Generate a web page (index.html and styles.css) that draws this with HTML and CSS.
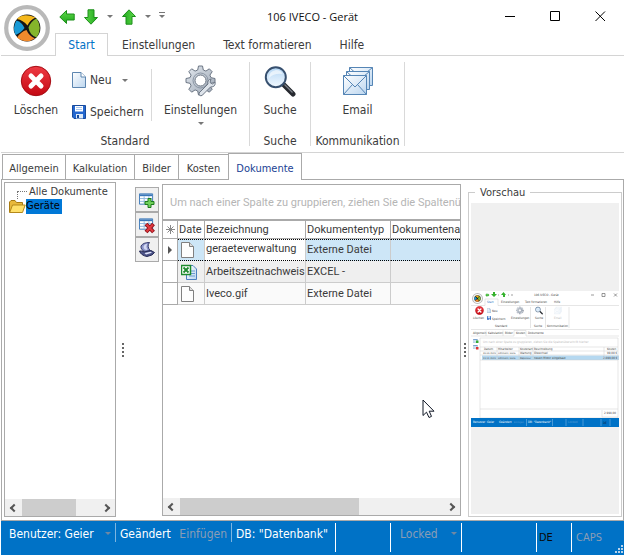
FILE: index.html
```html
<!DOCTYPE html>
<html lang="de">
<head>
<meta charset="utf-8">
<title>106 IVECO - Gerät</title>
<link rel="stylesheet" href="styles.css">
</head>
<body>
<svg width="0" height="0" class="defs" aria-hidden="true">
  <defs>
    <linearGradient id="red" x1="0" y1="0" x2="0" y2="1"><stop offset="0" stop-color="#ee3b44"/><stop offset="1" stop-color="#c40812"/></linearGradient>
    <linearGradient id="steel" x1="0" y1="0" x2="1" y2="1"><stop offset="0" stop-color="#e3e8ee"/><stop offset="1" stop-color="#9aa5b3"/></linearGradient>
    <linearGradient id="paper" x1="0" y1="0" x2="1" y2="1"><stop offset="0" stop-color="#ffffff"/><stop offset="1" stop-color="#bcd6ef"/></linearGradient>
    <linearGradient id="glass" x1="0" y1="0" x2="0" y2="1"><stop offset="0" stop-color="#b4d6f4"/><stop offset="1" stop-color="#f2f9ff"/></linearGradient>
    <linearGradient id="green" x1="0" y1="0" x2="0" y2="1"><stop offset="0" stop-color="#5fd84a"/><stop offset="1" stop-color="#1fa81c"/></linearGradient>
    <symbol id="logo" viewBox="0 0 46 46">
      <circle cx="23" cy="23" r="20.8" fill="#fff" stroke="#b9b9b9" stroke-width="4.2"/>
      <circle cx="23" cy="23" r="13.400" fill="#151515"/>
      <path d="M13 14Q19 7.500 31.500 12.500Q26 15 23.500 20.500Q19 15 13 14Z" fill="#f5b81c"/>
      <path d="M32.500 13.500Q39 23 32.500 32.500Q25.500 30 24.500 22.500Q27 16 32.500 13.500Z" fill="#85b52b"/>
      <path d="M12.500 15.500Q8 23 11.500 30Q17 28 20.500 23Q18 17 12.500 15.500Z" fill="#1a9ad6"/>
      <path d="M13 32.500Q17 26.500 22.500 25Q25 31 31 33.500Q22 39.500 13 32.500Z" fill="#f08a2c"/>
    </symbol>
    <symbol id="arrow" viewBox="0 0 16 16"><path d="M.8 8L7.500 1.500V5H15.200V11H7.500V14.500Z" fill="url(#green)" stroke="#1c8f1a"/></symbol>
    <symbol id="gear" viewBox="0 0 32 32">
      <path d="M13.500 1h4l.8 4 2.600 1.100 3.400-2.300 2.900 2.900-2.300 3.400 1.100 2.600 4 .8v4l-4 .8-1.100 2.600 2.300 3.400-2.900 2.900-3.400-2.300-2.600 1.100-.8 4h-4l-.8-4-2.600-1.100-3.400 2.300-2.900-2.900 2.300-3.400L5 18.300l-4-.8v-4l4-.8 1.100-2.600-2.300-3.400 2.900-2.900 3.400 2.300L12.700 5Z" fill="url(#steel)" stroke="#6d7785"/>
      <circle cx="15.500" cy="15.500" r="5.500" fill="#fff" stroke="#6d7785"/>
      <circle cx="15.500" cy="15.500" r="7.500" fill="none" stroke="#8b96a4"/>
      <path d="M14 28L23 19Q22 15 26 14L25 17.500L27.500 19L30 17Q31 22 25.500 22L17 30.500Q14 31.500 14 28Z" fill="#dde3ea" stroke="#6d7785"/>
    </symbol>
    <symbol id="lens" viewBox="0 0 32 32">
      <path d="M20 20L29 29" stroke="#26292f" stroke-width="5" stroke-linecap="round"/>
      <path d="M20.500 19.500L28.500 27.500" stroke="#7c8189" stroke-width="1.200"/>
      <circle cx="11.800" cy="12.200" r="10" fill="url(#glass)" stroke="#37506f" stroke-width="2"/>
      <path d="M5 13Q5 6 12 5Q17 5 18.500 9Q10 8 5 13Z" fill="#fff" opacity=".6"/>
    </symbol>
    <symbol id="mail" viewBox="0 0 32 30">
      <g fill="url(#paper)" stroke="#5585b5">
        <path d="M7.500 1.500h23v18h-23z"/><path d="M7.500 1.500l11 10 12-10" fill="none"/>
        <path d="M4.500 5.500h23v18h-23z"/><path d="M4.500 5.500l11 10 12-10" fill="none"/>
        <path d="M1.500 9.500h23v19h-23z"/><path d="M1.500 28.500l9-10M24.500 28.500l-9-10M1.500 9.500L13 21L24.500 9.500" fill="none"/>
      </g>
    </symbol>
    <symbol id="delete" viewBox="0 0 32 32"><circle cx="16" cy="16" r="14.700" fill="url(#red)" stroke="#a50c14"/><path d="M11 11L21 21M21 11L11 21" stroke="#fff" stroke-width="5" stroke-linecap="round"/></symbol>
    <symbol id="new" viewBox="0 0 14 16"><path d="M.5.500H9L13.500 5V15.500H.5Z" fill="url(#paper)" stroke="#5d86b0"/><path d="M9 .5V5H13.500" fill="#fff" stroke="#5d86b0"/></symbol>
    <symbol id="save" viewBox="0 0 14 14"><path d="M.5.500H13.500V13.500H2L.5 12Z" fill="#2467cf" stroke="#174a9c"/><path d="M3 1h8v5.500H3z" fill="#fff"/><path d="M4 2.500h6M4 4.500h6" stroke="#a8c6ec"/><path d="M4 9h7v4.500H4z" fill="#dce9f8"/><path d="M5 10h2v3H5z" fill="#174a9c"/></symbol>
    <symbol id="sheet" viewBox="0 0 16 12"><path d="M.5.500h14v11H.5z" fill="#fff" stroke="#3976b8"/><path d="M1 1h13v2H1z" fill="#3976b8"/><path d="M1 5.500h13M1 8.500h13M5.500 3v8M10.500 3v8" stroke="#8eb7df"/></symbol>
    <symbol id="page" viewBox="0 0 13 16"><path d="M.5.500H8.500L12.500 4.500V15.500H.5Z" fill="#fdfdfd" stroke="#808080"/><path d="M8.500.5V4.500H12.500" fill="#ddd" stroke="#808080"/></symbol>
  </defs>
</svg>

<header class="top">
  <svg class="logo" role="img" aria-label="Programm"><use href="#logo"/></svg>
  <div class="titlebar">
    <nav class="quick" aria-label="Schnellzugriff">
      <button class="plain" aria-label="Zurück"><svg class="arr"><use href="#arrow"/></svg></button>
      <button class="plain" aria-label="Nächster"><svg class="arr down"><use href="#arrow"/></svg></button>
      <i class="caret"></i>
      <button class="plain" aria-label="Vorheriger"><svg class="arr up"><use href="#arrow"/></svg></button>
      <i class="caret"></i><i class="caret more"></i>
    </nav>
    <h1>106 IVECO - Gerät</h1>
    <div class="window">
      <button class="plain" aria-label="Minimieren"><svg width="11" height="11"><path d="M0 5.500H10" stroke="#000"/></svg></button>
      <button class="plain" aria-label="Maximieren"><svg width="11" height="11"><path d="M.5.500H9.500V9.500H.5Z" fill="none" stroke="#000"/></svg></button>
      <button class="plain" aria-label="Schließen"><svg width="11" height="11"><path d="M.5.500L10 10M10 .5L.5 10" stroke="#000"/></svg></button>
    </div>
  </div>
  <nav class="menu">
    <button class="plain on">Start</button><button class="plain">Einstellungen</button><button class="plain">Text formatieren</button><button class="plain">Hilfe</button>
  </nav>
</header>

<section class="ribbon">
  <div class="group standard">
    <div class="tools">
      <button class="plain big"><svg width="32" height="32"><use href="#delete"/></svg>Löschen</button>
      <div class="stack">
        <button class="plain small"><svg width="14" height="16"><use href="#new"/></svg>Neu<i class="caret"></i></button>
        <button class="plain small"><svg width="14" height="14"><use href="#save"/></svg>Speichern</button>
      </div>
      <button class="plain big config"><svg width="32" height="32"><use href="#gear"/></svg>Einstellungen<i class="caret"></i></button>
    </div>
    <div class="name">Standard</div>
  </div>
  <div class="group find">
    <div class="tools"><button class="plain big"><svg width="32" height="32"><use href="#lens"/></svg>Suche</button></div>
    <div class="name">Suche</div>
  </div>
  <div class="group comm">
    <div class="tools"><button class="plain big"><svg width="32" height="32"><use href="#mail"/></svg>Email</button></div>
    <div class="name">Kommunikation</div>
  </div>
</section>

<nav class="tabs">
  <button class="t1">Allgemein</button><button class="t2">Kalkulation</button><button class="t3">Bilder</button><button class="t4">Kosten</button><button class="t5 on">Dokumente</button>
</nav>

<main class="pane">
  <aside class="tree">
    <ul>
      <li class="all">Alle Dokumente</li>
      <li class="dev"><svg width="17" height="15"><path d="M.5 13.500V3L2 1.500H6L7.500 3.500H13.500V6" fill="#e9b93c" stroke="#a87b12"/><path d="M.7 13.500L3.500 6H16.200L13.500 13.500Z" fill="#ffe06a" stroke="#b4881a"/></svg><span>Geräte</span></li>
    </ul>
    <div class="scroll"><i class="chev"></i><i class="thumb"></i><i class="chev next"></i></div>
  </aside>
  <div class="split"><i></i><i></i><i></i><i></i></div>
  <div class="side">
    <button aria-label="Hinzufügen"><svg width="18" height="18"><use href="#sheet" width="15" height="12" x="1" y="2"/><path d="M10 7.500h3V10.500h3v3h-3v3h-3v-3H7v-3h3Z" fill="#6fd05a" stroke="#1d7a1d"/></svg></button>
    <button aria-label="Entfernen"><svg width="18" height="18"><use href="#sheet" width="15" height="12" x="1" y="2"/><path d="M8 8L15.500 16M15.500 8L8 16" stroke="#8f1018" stroke-width="4"/><path d="M8.500 8.500L15 15.500M15 8.500L8.500 15.500" stroke="#e23a40" stroke-width="2"/></svg></button>
    <button aria-label="Scannen"><svg width="18" height="18"><path d="M3 5Q5 1.500 11.500 1.500Q8.500 5 12 9.500L7 10.500Q2.500 9 3 5Z" fill="#8d95c9" stroke="#34396c"/><path d="M5.500 5.500Q6.500 3 9 2.800Q7.500 6 9.500 9Q5.500 9 5.500 5.500Z" fill="#d4d9f4"/><path d="M1.500 10Q3 9.500 6.500 11L13 9.500L16.500 11.500Q15 14.500 9 15.500Q3 14.500 1.500 10Z" fill="#4d5489" stroke="#252a55"/><path d="M6.500 12L12.500 10.800L14 11.800L8 13.500Z" fill="#e0e4fa"/></svg></button>
  </div>
  <section class="grid">
    <p>Um nach einer Spalte zu gruppieren, ziehen Sie die Spaltenü</p>
    <table>
      <colgroup><col class="c0"><col class="c1"><col class="c2"><col class="c3"><col></colgroup>
      <thead><tr><th class="mark"><svg width="9" height="9"><path d="M4.500 0V9M0 4.500H9M1.500 1.500L7.500 7.500M7.500 1.500L1.500 7.500" stroke="#888"/></svg></th><th>Date</th><th>Bezeichnung</th><th>Dokumententyp</th><th>Dokumentenar</th></tr></thead>
      <tbody>
        <tr class="sel"><td class="mark"><svg width="5" height="8"><path d="M0 0L4 4L0 8Z" fill="#555"/></svg></td><td class="ico"><svg width="13" height="16"><use href="#page"/></svg></td><td class="edit">geraeteverwaltung</td><td>Externe Datei</td><td></td></tr>
        <tr class="alt"><td class="mark"></td><td class="ico"><svg width="16" height="16"><path d="M5.500 1.500H12L15.500 5V15.500H5.500Z" fill="url(#paper)" stroke="#4c7fc0"/><path d="M8 7h6M8 9.500h6M8 12h6" stroke="#6a9ad2"/><path d="M.5 1.500H9.500V10.500H.5Z" fill="#fff" stroke="#1d8a2d" stroke-width="1.500"/><path d="M2.500 3.500L7.500 8.500M7.500 3.500L2.500 8.500" stroke="#1d8a2d" stroke-width="1.800"/></svg></td><td>Arbeitszeitnachweis</td><td>EXCEL -</td><td></td></tr>
        <tr><td class="mark"></td><td class="ico"><svg width="13" height="16"><use href="#page"/></svg></td><td>Iveco.gif</td><td>Externe Datei</td><td></td></tr>
      </tbody>
    </table>
    <div class="scroll"><i class="chev"></i><i class="thumb"></i><i class="chev next"></i></div>
    <svg class="pointer" width="13" height="20"><path d="M1 1V16.500L4.500 13.200L7 18.500L9.500 17.400L7.200 12.200H12Z" fill="#fff" stroke="#111827"/></svg>
  </section>
  <div class="split"><i></i><i></i><i></i><i></i></div>
  <fieldset class="preview">
    <legend>Vorschau</legend>
    <div class="canvas">
      <svg viewBox="0 0 148 136" role="img" aria-label="Vorschau des Dokuments">
        <rect width="148" height="136" fill="#fff"/>
        <use href="#logo" x="1" y="2" width="11" height="11"/>
        <g><use href="#arrow" x="14" y="2" width="4.500" height="4"/><path d="M22 1v2h-2l3 3 3-3h-2V1zM32 6V4h-2l2.500-3L35 4h-1v2z" fill="#35b22d"/><path d="M27 4h1M37 4h1M40 4h2" stroke="#777" stroke-width=".7"/></g>
        <path d="M120 4h3M131 2.500h3v3h-3zM143 2.500l3 3M146 2.500l-3 3" fill="none" stroke="#555" stroke-width=".6"/>
        <rect x="11" y="64.500" width="137" height="4.500" fill="#b5d8f0"/>
        <g font-family="DejaVu Sans Condensed, DejaVu Sans, sans-serif" font-size="3" fill="#444">
          <text x="63" y="5">106 IVECO - Gerät</text>
          <text x="16" y="12" fill="#2a74c4">Start</text><text x="30" y="12">Einstellungen</text><text x="54" y="12">Text formatieren</text><text x="83" y="12">Hilfe</text>
          <text x="2" y="28">Löschen</text><text x="21" y="21">Neu</text><text x="21" y="29">Speichern</text><text x="40" y="28">Einstellungen</text><text x="64" y="28">Suche</text><text x="83" y="28" fill="#bbb">Email</text>
          <text x="24" y="36">Standard</text><text x="63" y="36">Suche</text><text x="76" y="36">Kommunikation</text>
          <text x="2" y="43">Allgemein</text><text x="17" y="43">Kalkulation</text><text x="34" y="43">Bilder</text><text x="45" y="43">Kosten</text><text x="57" y="43">Dokumente</text>
          <text x="12" y="52" fill="#bbb">Um nach einer Spalte zu gruppieren, ziehen Sie die Spaltenüberschrift hierher</text>
          <text x="13" y="59">Datum</text><text x="27" y="59">Mitarbeiter</text><text x="49" y="59">Kostenart</text><text x="63" y="59">Beschreibung</text><text x="136" y="59">Kosten</text>
          <text x="12" y="63" font-size="2.500">30.06.2020</text><text x="27" y="63" font-size="2.500">Lohmann, Hans</text><text x="49" y="63">Wartung</text><text x="63" y="63">Ölwechsel</text><text x="136" y="63">99,00 €</text>
          <text x="12" y="68" font-size="2.500">11.11.2020</text><text x="27" y="68" font-size="2.500">Lohmann, Hans</text><text x="49" y="68" font-size="2.500">Reparatur</text><text x="63" y="68">neuen Motor eingebaut</text><text x="132" y="68">2.899,00 €</text>
          <text x="133" y="123">2.998,00</text>
        </g>
        <path d="M0 14.500H14V8H27V14.500H148M0 38.500H148M0 45H43V39.500H55V45H148M15 39.500V45M32 39.500V45M9 47H147V127H9ZM9 56H147M9 60H147M9 64H147M9 69H147M9 118H147M131 119V126H147M26 56V69M48 56V69M62 56V69M133 56V69M59.500 16V37M74.500 16V37M98 16V37" fill="none" stroke="#ccc" stroke-width=".5"/>
        <use href="#delete" x="4" y="15" width="9" height="9"/><use href="#new" x="16" y="17" width="4" height="5"/><use href="#save" x="16" y="25" width="4" height="4"/>
        <use href="#gear" x="45" y="15" width="8" height="9"/><use href="#lens" x="64" y="15" width="8" height="9"/><use href="#mail" x="83" y="15" width="8" height="9" opacity=".2"/>
        <use href="#sheet" x="2" y="48" width="5" height="4"/><path d="M5 49.500h2.500v2.500H5z" fill="#3a3"/><use href="#sheet" x="2" y="54" width="5" height="4"/><path d="M5 56h2.500v2.500H5z" fill="#d33"/>
        <rect y="127" width="148" height="9" fill="#0072c6"/>
        <g font-family="DejaVu Sans Condensed, DejaVu Sans, sans-serif" font-size="3" fill="#fff"><text x="2" y="132">Benutzer: Geier</text><text x="28" y="132">Geändert</text><text x="43" y="132" font-size="2.500" fill="#5d9fd4">Einfügen</text><text x="57" y="132">DB: "Datenbank"</text><text x="97" y="132" fill="#5d9fd4">Locked</text><text x="132" y="133" fill="#123">DE</text></g>
        <path d="M55.500 128V135M81.500 128V135M95 128V135M112 128V135M130 128V135M139 128V135" stroke="#8fc3ea" stroke-width=".5"/>
      </svg>
    </div>
  </fieldset>
</main>

<footer class="status">
  <div class="short">Benutzer: Geier<i class="caret"></i></div>
  <div class="short">Geändert<span class="dim">Einfügen</span></div>
  <div>DB: "Datenbank"</div>
  <div></div>
  <div class="lock dim">Locked<i class="caret"></i></div>
  <div></div>
  <div class="low de">DE</div>
  <div class="low dim last">CAPS</div>
  <svg class="grip" width="9" height="9"><path d="M6 0h2v2H6zM3 3h2v2H3zM6 3h2v2H6zM0 6h2v2H0zM3 6h2v2H3zM6 6h2v2H6z" fill="#b9d3ea"/></svg>
</footer>
</body>
</html>
```

FILE: styles.css
```css
* { box-sizing: border-box; }
body {
  margin: 0;
  padding: 0 1px 1px;
  min-height: 100vh;
  display: flex;
  flex-direction: column;
  background: #fff;
  color: #3b3b3b;
  font: 12px/16px "DejaVu Sans Condensed", "DejaVu Sans", sans-serif;
}
button { font: inherit; color: inherit; padding: 0; margin: 0; }
.plain { border: 0; background: none; }
svg { display: block; flex: none; }
.defs { position: absolute; }
i { display: block; flex: none; }
.caret { width: 0; border: 3px solid transparent; border-top-color: #777; border-bottom: 0; }
.more { position: relative; }
.more::before { content: ""; position: absolute; left: -3px; top: -6px; width: 6px; height: 1px; background: #777; }

/* header */
.top { display: grid; grid-template: 33px 22px / 54px 1fr; border-bottom: 1px solid #d4d4d4; }
.logo { grid-area: 1 / 1 / 3 / 2; width: 46px; height: 46px; margin: 5px 0 0 3px; }
.titlebar { grid-area: 1 / 1 / 2 / 3; display: grid; grid-template-columns: 1fr auto 1fr; align-items: center; }
.quick { display: flex; align-items: center; gap: 8px; padding-left: 58px; }
.arr { width: 16px; height: 16px; }
.down { transform: rotate(-90deg); }
.up { transform: rotate(90deg); }
h1 { margin: 0; font: 11px/16px "Open Sans", sans-serif; color: #111; }
.window { display: flex; justify-content: flex-end; gap: 34px; padding-right: 18px; }
.menu { grid-area: 2 / 2; display: flex; }
.menu button { padding: 0 14px; height: 23px; }
.menu .on { width: 53px; padding: 0; border: 1px solid #d4d4d4; border-bottom: 0; color: #0072c6; background: #fff; }

/* ribbon */
.ribbon { display: flex; height: 97px; border-bottom: 1px solid #d4d4d4; padding: 6px 0; }
.group { display: flex; flex-direction: column; justify-content: space-between; border-right: 1px solid #d9d9d9; }
.standard { width: 249px; }
.find { width: 61px; }
.comm { width: 94px; }
.name { text-align: center; line-height: 10px; }
.tools { display: flex; justify-content: center; }
.standard .tools { justify-content: flex-start; }
.big { display: flex; flex-direction: column; align-items: center; padding-top: 3px; gap: 5px; }
.standard .big { width: 70px; }
.big .caret { margin-top: -1px; }
.standard .config { width: 97px; }
.stack { display: flex; flex-direction: column; gap: 14px; width: 81px; height: 52px; margin-top: 7px; padding: 2px 0 0 1px; border-right: 1px solid #d9d9d9; }
.small { display: flex; align-items: center; gap: 4px; height: 18px; line-height: 18px; }
.small .caret { margin-left: 6px; }

/* document tabs */
.tabs { display: flex; align-items: flex-end; height: 27px; padding-left: 1px; border-bottom: 1px solid #aaa; }
.tabs button { height: 25px; padding-top: 3px; border: 1px solid #aaa; border-right: 0; border-bottom: 0; background: #fff; font-size: 11px; }
.t1 { width: 63px; } .t2 { width: 69px; } .t3 { width: 44px; } .t4 { width: 50px; }
.tabs .t5 { width: 74px; height: 27px; margin-bottom: -1px; border-right: 1px solid #aaa; color: #1b3f94; }

.pane { flex: 1; display: flex; padding: 2px 1px 3px 3px; border: 1px solid #aaa; border-top: 0; }
.tree { display: flex; flex-direction: column; justify-content: space-between; width: 112px; border: 1px solid #aaa; margin-left: -1px; }
.tree ul { list-style: none; margin: 0; padding: 1px 0 0; font-size: 11px; line-height: 15px; }
.tree li { display: flex; }
.all { padding-left: 24px; position: relative; }
.all::before { content: ""; position: absolute; left: 12px; top: 7px; width: 9px; height: 7px; border: 1px dotted #777; border-right: 0; border-bottom: 0; }
.dev svg { margin-left: 4px; }
.dev span { background: #0078d7; color: #000; line-height: 13px; padding-right: 2px; }
.scroll { display: flex; align-items: center; height: 17px; background: #f0f0f0; }
.thumb { height: 17px; background: #cdcdcd; margin-left: 8px; }
.tree .thumb { width: 54px; }
.grid .thumb { width: 179px; }
.chev { width: 6px; height: 6px; border: solid #555; border-width: 0 0 2px 2px; transform: rotate(45deg); margin-left: 6px; margin-right: -3px; }
.next { margin: 0 6px 0 auto; transform: rotate(225deg); }
.split { width: 7px; display: flex; flex-direction: column; align-items: center; justify-content: center; gap: 2px; }
.tree + .split { width: 13px; }
.split i { width: 2px; height: 2px; background: #666; }
.side { width: 24px; margin: 5px 3px 0 6px; }
.side button { display: grid; place-items: center; width: 24px; height: 25px; border: 1px solid #aaa; background: #f0f0f0; }

/* data grid */
.grid { position: relative; flex: 1; min-width: 0; display: flex; flex-direction: column; overflow: hidden; border: 1px solid #aaa; margin: 2px 0 1px; font-family: Roboto, "Liberation Sans", sans-serif; }
.grid p { margin: 0; height: 36px; padding: 10px 0 0 7px; line-height: 16px; white-space: nowrap; color: #b5b5b5; border-bottom: 2px solid #aaa; font-size: 11px; }
.grid .scroll { margin-top: auto; }
table { table-layout: fixed; width: 100%; border-collapse: separate; border-spacing: 0; font-size: 11px; }
.c0 { width: 15px; } .c1 { width: 27px; } .c2 { width: 101px; } .c3 { width: 85px; }
th, td { padding: 0 0 0 1px; font-weight: normal; text-align: left; white-space: nowrap; border-right: 1px solid #ccc; border-bottom: 1px solid #ccc; }
th { height: 18px; border-color: #aaa; }
td { height: 22px; background: #fafafa; }
tr > :last-child { border-right: 0; }
.mark { background: #fff; border-color: #aaa; }
.mark svg { margin: auto; }
.ico { padding-left: 3px; }
.alt td:not(.mark) { background: #efefef; }
.sel td:not(.mark) { background: #cde6f7; border-bottom: 1px dotted #000; border-top: 1px dotted #000; }
.sel .edit:not(.mark) { background: #fff; padding-bottom: 2px; }
.pointer { position: absolute; left: 259px; top: 214px; }

.preview { width: 154px; min-width: 0; margin: 3px 0 0; padding: 3px 2px 2px; border: 1px solid #ccc; display: flex; }
.preview legend { margin-left: 4px; padding: 0 5px; line-height: 15px; font-size: 11px; }
.canvas { flex: 1; display: flex; align-items: center; background: #f0f0f0; }
.canvas svg { width: 100%; }

/* status bar */
.status { position: relative; display: grid; grid-template-columns: 115px 116px 104px 55px 71px 1fr 35px 52px; height: 34px; padding: 2px 0 3px; background: #0072c6; color: #fff; }
.status div { display: flex; align-items: flex-start; padding: 3px 0 0 4px; border-right: 1px solid #fff; line-height: 16px; white-space: nowrap; }
.status .short { height: 19px; border-color: #7db5e0; }
.status .short:first-child { padding-left: 8px; }
.status .caret { margin: 6px 4px 0 auto; border-top-color: #6f88a3; }
.status .short .dim { margin-left: auto; padding-right: 4px; }
.status .dim { color: #8a9db5; }
.status .lock { padding-left: 9px; }
.status .low { padding: 7px 0 0 2px; font-size: 11px; }
.status .de { color: #0a0a0a; }
.status .last { border: 0; padding-left: 4px; }
.grip { position: absolute; right: 0; bottom: 1px; }
```
